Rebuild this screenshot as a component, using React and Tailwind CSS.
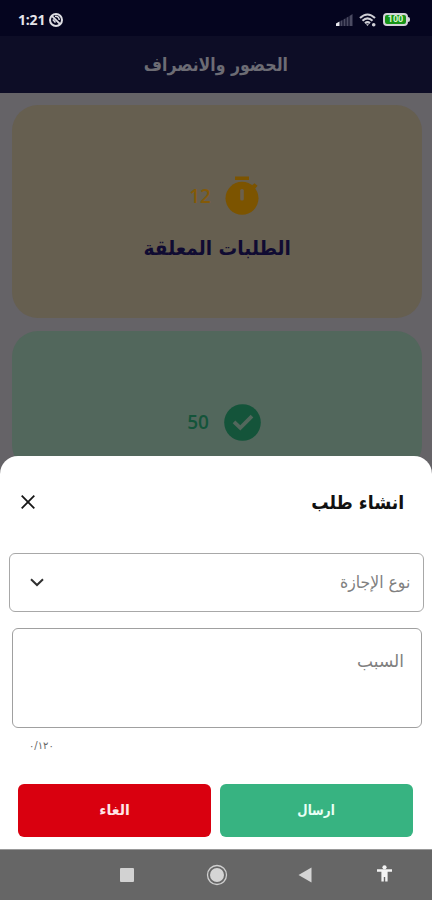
import React from 'react'

const SignalIcon = () => (
    <svg width="17" height="12" viewBox="0 0 17 12">
        <path d="M0 12V9.5L3.5 7.5V12Z" fill="#e8e8ee" />
        <path d="M4.5 12V7L6.5 6V12ZM7.5 12V5.5L9.5 4.3V12ZM10.5 12V3.7L12.5 2.5V12ZM13.5 12V2L16.5 0V12Z" fill="#4b4b62" />
    </svg>
)

const WifiIcon = () => (
    <svg width="18" height="14" viewBox="0 0 18 14" fill="none" stroke="#d0d0d6" strokeWidth="2.1">
        <path d="M1 5Q8.5 -2 16 5" />
        <path d="M3.5 7.8Q8.5 3 13.5 7.8" />
        <path d="M6 10.3Q8.5 8 11 10.3" />
        <path d="M7 11.3h3L8.5 13Z" fill="#d0d0d6" stroke="none" />
        <circle cx="14.7" cy="11.8" r="1.8" fill="#d0d0d6" stroke="none" />
    </svg>
)

const MutedIcon = () => (
    <svg width="14" height="14" viewBox="0 0 14 14" fill="none" stroke="#dedee3">
        <circle cx="7" cy="7" r="6" strokeWidth="2" />
        <path d="M3 3.2L11 11" strokeWidth="1.8" />
        <path d="M6 3.4Q10 3 10.3 7M3.8 6.5L6.5 9.6" strokeWidth="1.5" />
    </svg>
)

const TimerIcon = () => (
    <svg width="34" height="40" viewBox="0 0 34 40">
        <path d="M10 0.5h14v3.5H10z" fill="#7c5400" />
        <circle cx="17" cy="22.3" r="16.5" fill="#7c5400" />
        <path d="M25 11L29.5 7.2L32.5 9.8L28.5 14.5Z" fill="#7c5400" />
        <rect x="15.2" y="13" width="3.6" height="11.5" rx="1.6" fill="#6b604c" />
    </svg>
)

const CheckIcon = () => (
    <svg width="37" height="37" viewBox="0 0 37 37">
        <circle cx="18.5" cy="18.5" r="18.3" fill="#14543a" />
        <path d="M10 17.8L16.3 23.8L28 12.2" fill="none" stroke="#52675c" strokeWidth="3.8" />
    </svg>
)

const PersonIcon = () => (
    <svg width="17" height="17" viewBox="0 0 17 17" fill="#f3f3f3">
        <circle cx="8.5" cy="2.3" r="2.1" />
        <path d="M1 4.2H16V6.8H11.6V16.5H9.2V12H7.8V16.5H5.4V6.8H1Z" />
    </svg>
)

const StatusBar = () => (
    <div className="flex h-9 items-center justify-between bg-[#05051f] pt-[3px] pr-[22px] pl-[18px]">
        <div className="flex items-center gap-[3px]">
            <span className="w-[28px] font-['Open_Sans',sans-serif] text-[14px] leading-4 font-bold tracking-[-0.2px] text-[#e4e4e9]">1:21</span>
            <MutedIcon />
        </div>
        <div className="flex items-center">
            <SignalIcon />
            <div className="ml-1.5"><WifiIcon /></div>
            <div className="ml-1.5 flex h-[13px] w-[25px] items-center justify-center rounded-[4px] border-2 border-[#d3d3d8] bg-[#169416]">
                <span className="font-['Roboto',sans-serif] text-[9px] leading-none font-bold text-[#d8f5d0]">100</span>
            </div>
            <div className="h-[5px] w-0.5 rounded-r bg-[#d3d3d8]" />
        </div>
    </div>
)

const NavBar = () => (
    <div className="flex h-[51px] items-center border-t border-[#999] bg-[#666]">
        <div className="ml-[120px] size-[14px] rounded-[1px] bg-[#d2d2d2]" />
        <svg className="ml-[72px]" width="22" height="22" viewBox="0 0 22 22">
            <circle cx="11" cy="11" r="9.5" fill="none" stroke="#cfcfcf" strokeWidth="1.3" />
            <circle cx="11" cy="11" r="7" fill="#d5d5d5" />
        </svg>
        <svg className="ml-[70px]" width="14" height="16" viewBox="0 0 14 16">
            <path d="M0.5 8L13.5 0.5V15.5Z" fill="#d5d5d5" />
        </svg>
        <div className="-mt-[3px] ml-[64px]"><PersonIcon /></div>
    </div>
)

const App = () => {
    return (
        <div dir="ltr" className="relative flex h-[900px] w-[432px] flex-col overflow-hidden bg-[#656367] font-['DejaVu_Sans',sans-serif]">
            <StatusBar />
            <div className="flex h-[57px] items-center justify-center bg-[#0d0d26]">
                <h1 dir="rtl" className="scale-x-[0.85] text-[18.5px] font-bold whitespace-nowrap text-[#6c6c74]">الحضور والانصراف</h1>
            </div>

            <div className="flex flex-col gap-[13px] px-3 pt-3">
                <div className="flex h-[213px] w-[410px] flex-col items-center rounded-[26px] bg-[#665f50] pt-[71px]">
                    <div className="flex items-center gap-[14px] pl-[14px]">
                        <span className="font-['Open_Sans',sans-serif] text-[19px] leading-6 font-semibold text-[#845a08]">12</span>
                        <TimerIcon />
                    </div>
                    <h2 dir="rtl" className="mt-[18px] scale-x-[0.93] text-[20px] leading-7 font-bold whitespace-nowrap text-[#100b32]">الطلبات المعلقة</h2>
                </div>
                <div className="flex h-[140px] w-[410px] justify-center rounded-[26px] bg-[#52675c] pt-[69px]">
                    <div className="flex h-11 items-center gap-[15px] pl-[14px]">
                        <span className="font-['Open_Sans',sans-serif] text-[19px] leading-6 font-semibold text-[#14543a]">50</span>
                        <CheckIcon />
                    </div>
                </div>
            </div>

            <div className="absolute inset-x-0 bottom-0">
                <div className="flex h-[393px] flex-col rounded-t-[18px] bg-white">
                    <div className="flex h-[97px] items-center justify-between pr-7 pb-[5px] pl-[21px]">
                        <svg width="14" height="14" viewBox="0 0 14 14" stroke="#161616" strokeWidth="1.8">
                            <path d="M0.7 0.7L13.3 13.3M13.3 0.7L0.7 13.3" />
                        </svg>
                        <h2 dir="rtl" className="origin-right scale-x-[0.91] text-[19px] font-bold whitespace-nowrap text-[#111]">انشاء طلب</h2>
                    </div>
                    <div className="mr-2 ml-[9px] flex h-[59px] items-center justify-between rounded-[6px] border border-[#a8a8a8] pr-[13px] pl-5">
                        <svg width="14" height="9" viewBox="0 0 14 9" fill="none" stroke="#303030" strokeWidth="2">
                            <path d="M1 1.2L7 7L13 1.2" />
                        </svg>
                        <span dir="rtl" className="origin-right scale-x-[0.92] text-[17px] whitespace-nowrap text-[#808080]">نوع الإجازة</span>
                    </div>
                    <div dir="rtl" className="mr-[10px] ml-3 mt-4 h-[100px] rounded-[6px] border border-[#a0a0a0] pt-5 pr-[17px] text-[17px] text-[#808080]">
                        السبب
                    </div>
                    <div className="mt-1.5 ml-[29px] flex h-[22px] w-[30px] items-center text-[10px] text-[#666]">
                        <bdo dir="ltr">٠/١٢٠</bdo>
                    </div>
                    <div className="mx-[18px] mt-7 flex h-[53px] gap-[9px]">
                        <button dir="rtl" className="w-[193px] rounded-[6px] bg-[#d9000f] text-[14px] font-bold text-[#ffe5e7]">الغاء</button>
                        <button dir="rtl" className="w-[193px] rounded-[6px] bg-[#37b381] text-[14px] font-bold text-[#e8fff5]">
                            <span className="inline-block scale-x-[0.85]">ارسال</span>
                        </button>
                    </div>
                </div>
                <NavBar />
            </div>
        </div>
    )
}

export default App
